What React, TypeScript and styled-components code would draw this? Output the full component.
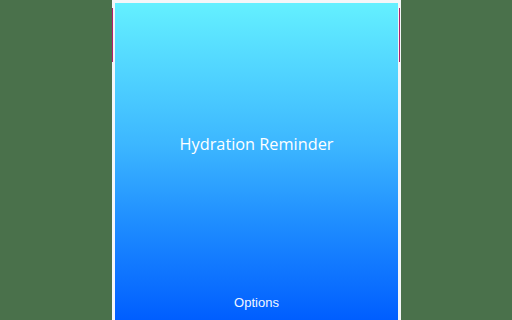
import React from "react"
import styled, { createGlobalStyle } from "styled-components"

const GlobalStyle = createGlobalStyle`
  html, body {
    margin: 0;
    padding: 0;
    height: 100%;
    background: #4a714b;
  }
  #root {
    height: 100%;
  }
`

const Stage = styled.div`
  display: flex;
  justify-content: center;
  height: 320px;
  padding-left: 1px;
`

const Popup = styled.div`
  position: relative;
  display: flex;
  flex-direction: column;
  width: 283px;
  height: 317px;
  border: 3px solid #f4f6f8;
  border-bottom: none;
  background: linear-gradient(to bottom, #64f0ff 0%, #3cb6ff 45%, #1e8cff 70%, #005eff 100%);
`

const EdgeMark = styled.span<{ side: "left" | "right" }>`
  position: absolute;
  top: 5px;
  ${(p) => (p.side === "left" ? "left: -3px;" : "right: -2px;")}
  width: 1px;
  height: 54px;
  background: #b0206e;
`

const Main = styled.div`
  flex: 1;
  display: flex;
  align-items: center;
  justify-content: center;
`

const Title = styled.h1`
  margin: 0;
  font-family: "Open Sans", "Noto Sans", sans-serif;
  font-weight: 400;
  font-size: 16.3px;
  color: #ffffff;
`

const Footer = styled.div`
  height: 35px;
  display: flex;
  align-items: center;
  justify-content: center;
`

const OptionsLink = styled.a`
  font-family: "Liberation Sans", Arial, sans-serif;
  font-size: 13px;
  color: #f2f6ff;
  text-decoration: none;
  cursor: pointer;
`

const App = () => {
  return (
    <>
      <GlobalStyle />
      <Stage>
        <Popup>
          <EdgeMark side="left" />
          <EdgeMark side="right" />
          <Main>
            <Title>Hydration Reminder</Title>
          </Main>
          <Footer>
            <OptionsLink>Options</OptionsLink>
          </Footer>
        </Popup>
      </Stage>
    </>
  )
}

export default App
